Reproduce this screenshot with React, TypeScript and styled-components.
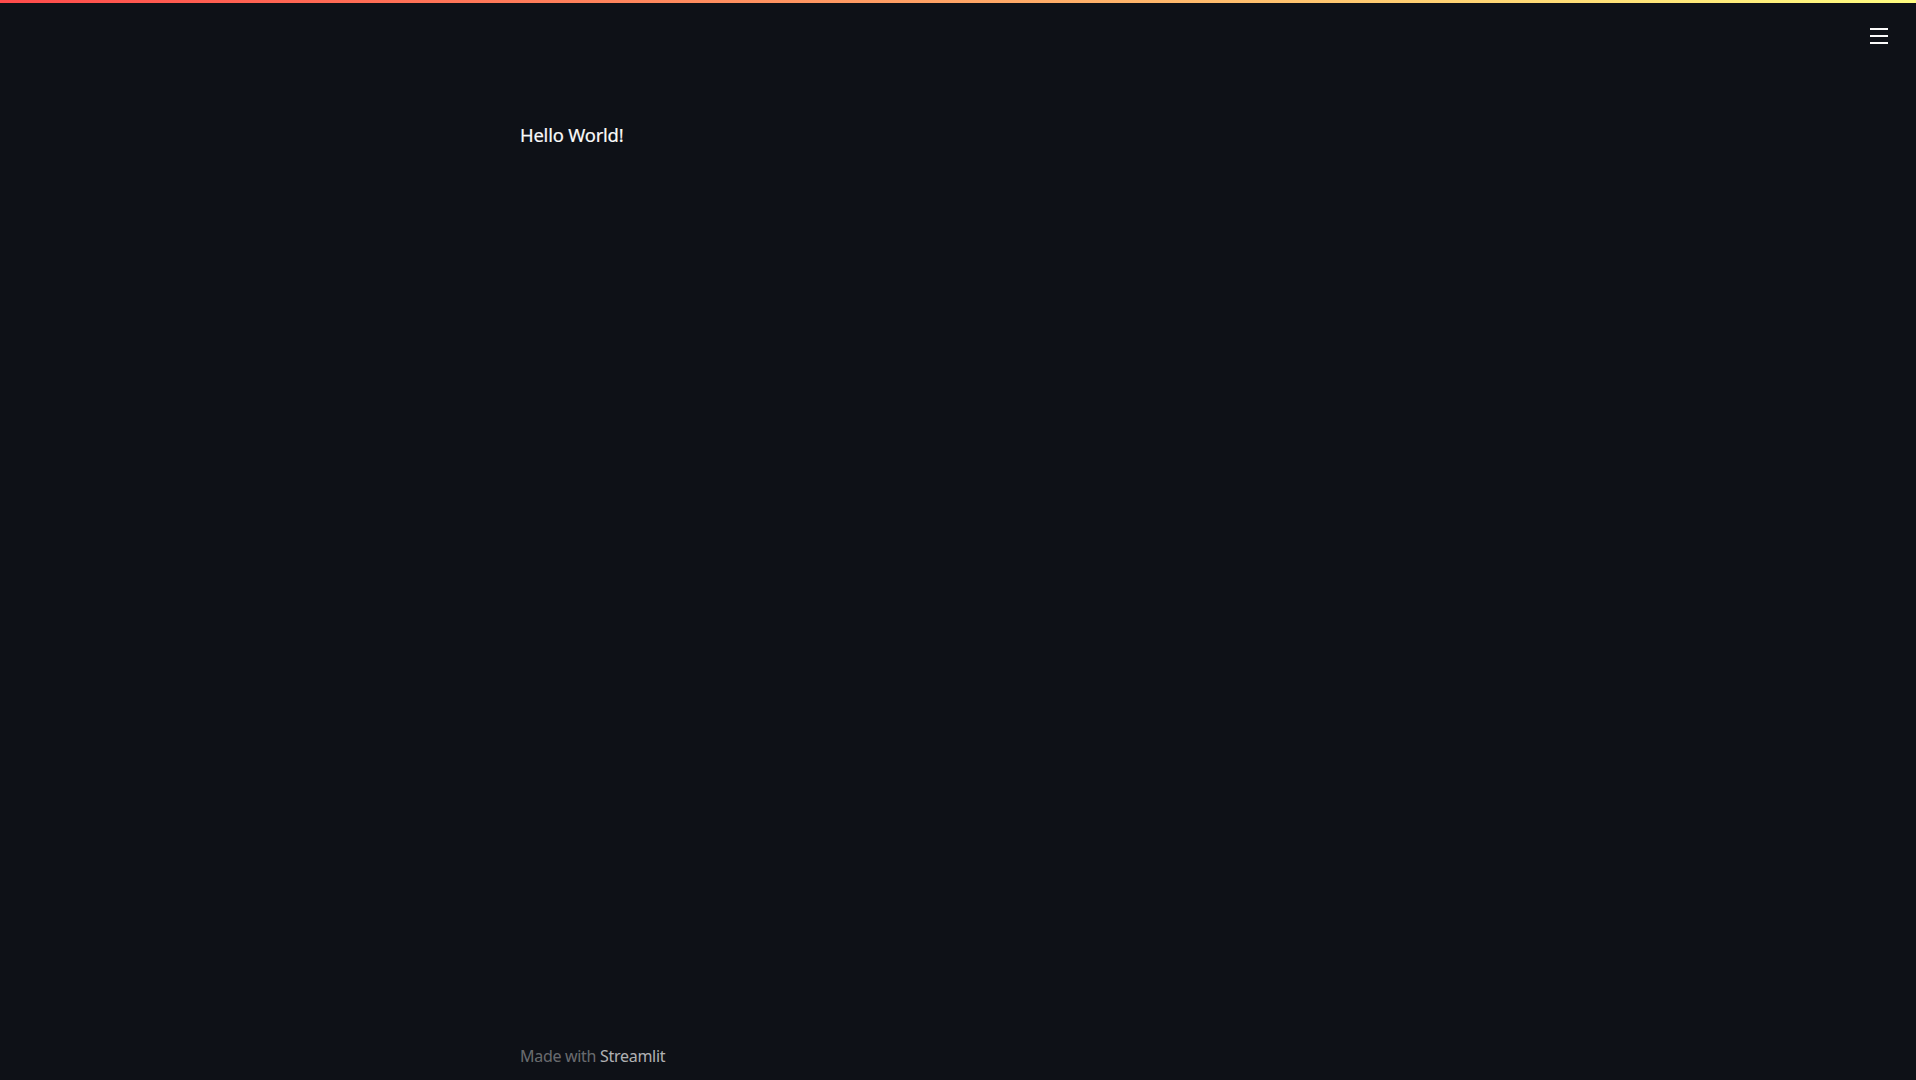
import React from "react";
import styled, { createGlobalStyle } from "styled-components";

const GlobalStyle = createGlobalStyle`
  html, body {
    margin: 0;
    padding: 0;
    background: #0e1117;
  }
  body {
    font-family: "Noto Sans", "Open Sans", sans-serif;
    color: #fafafa;
  }
  * { box-sizing: border-box; }
`;

const Page = styled.div`
  min-height: 100vh;
  display: flex;
  flex-direction: column;
  background: #0e1117;
`;

const Decoration = styled.div`
  height: 3px;
  width: 100%;
  background: linear-gradient(90deg, rgb(255, 75, 75), rgb(255, 253, 128));
  flex-shrink: 0;
`;

const Header = styled.header`
  display: flex;
  justify-content: flex-end;
  padding: 21px 24px 0 0;
  height: 57px;
`;

const MenuButton = styled.button`
  background: transparent;
  border: none;
  padding: 4px 4px;
  cursor: pointer;
  display: flex;
  flex-direction: column;
  gap: 5px;
  height: 24px;
`;

const MenuLine = styled.span`
  display: block;
  width: 18px;
  height: 2px;
  background: #fafafa;
`;

const Main = styled.main`
  flex: 1;
  width: 876px;
  margin: 0 auto;
  padding-top: 61px;
`;

const Paragraph = styled.p`
  margin: 0;
  font-size: 18.4px;
  line-height: 1.5;
  color: #fafafa;
  letter-spacing: -0.2px;
  -webkit-text-stroke: 0.2px #fafafa;
`;

const Footer = styled.footer`
  width: 876px;
  margin: 0 auto;
  padding-bottom: 12px;
  font-size: 16px;
  line-height: 1.5;
  color: rgba(250, 250, 250, 0.4);
  letter-spacing: -0.3px;
`;

const FooterLink = styled.a`
  color: rgba(250, 250, 250, 0.7);
  text-decoration: none;
`;

export default function App() {
  return (
    <>
      <GlobalStyle />
      <Page>
        <Decoration />
        <Header>
          <MenuButton aria-label="Menu">
            <MenuLine />
            <MenuLine />
            <MenuLine />
          </MenuButton>
        </Header>
        <Main>
          <Paragraph>Hello World!</Paragraph>
        </Main>
        <Footer>
          Made with <FooterLink href="#">Streamlit</FooterLink>
        </Footer>
      </Page>
    </>
  );
}
